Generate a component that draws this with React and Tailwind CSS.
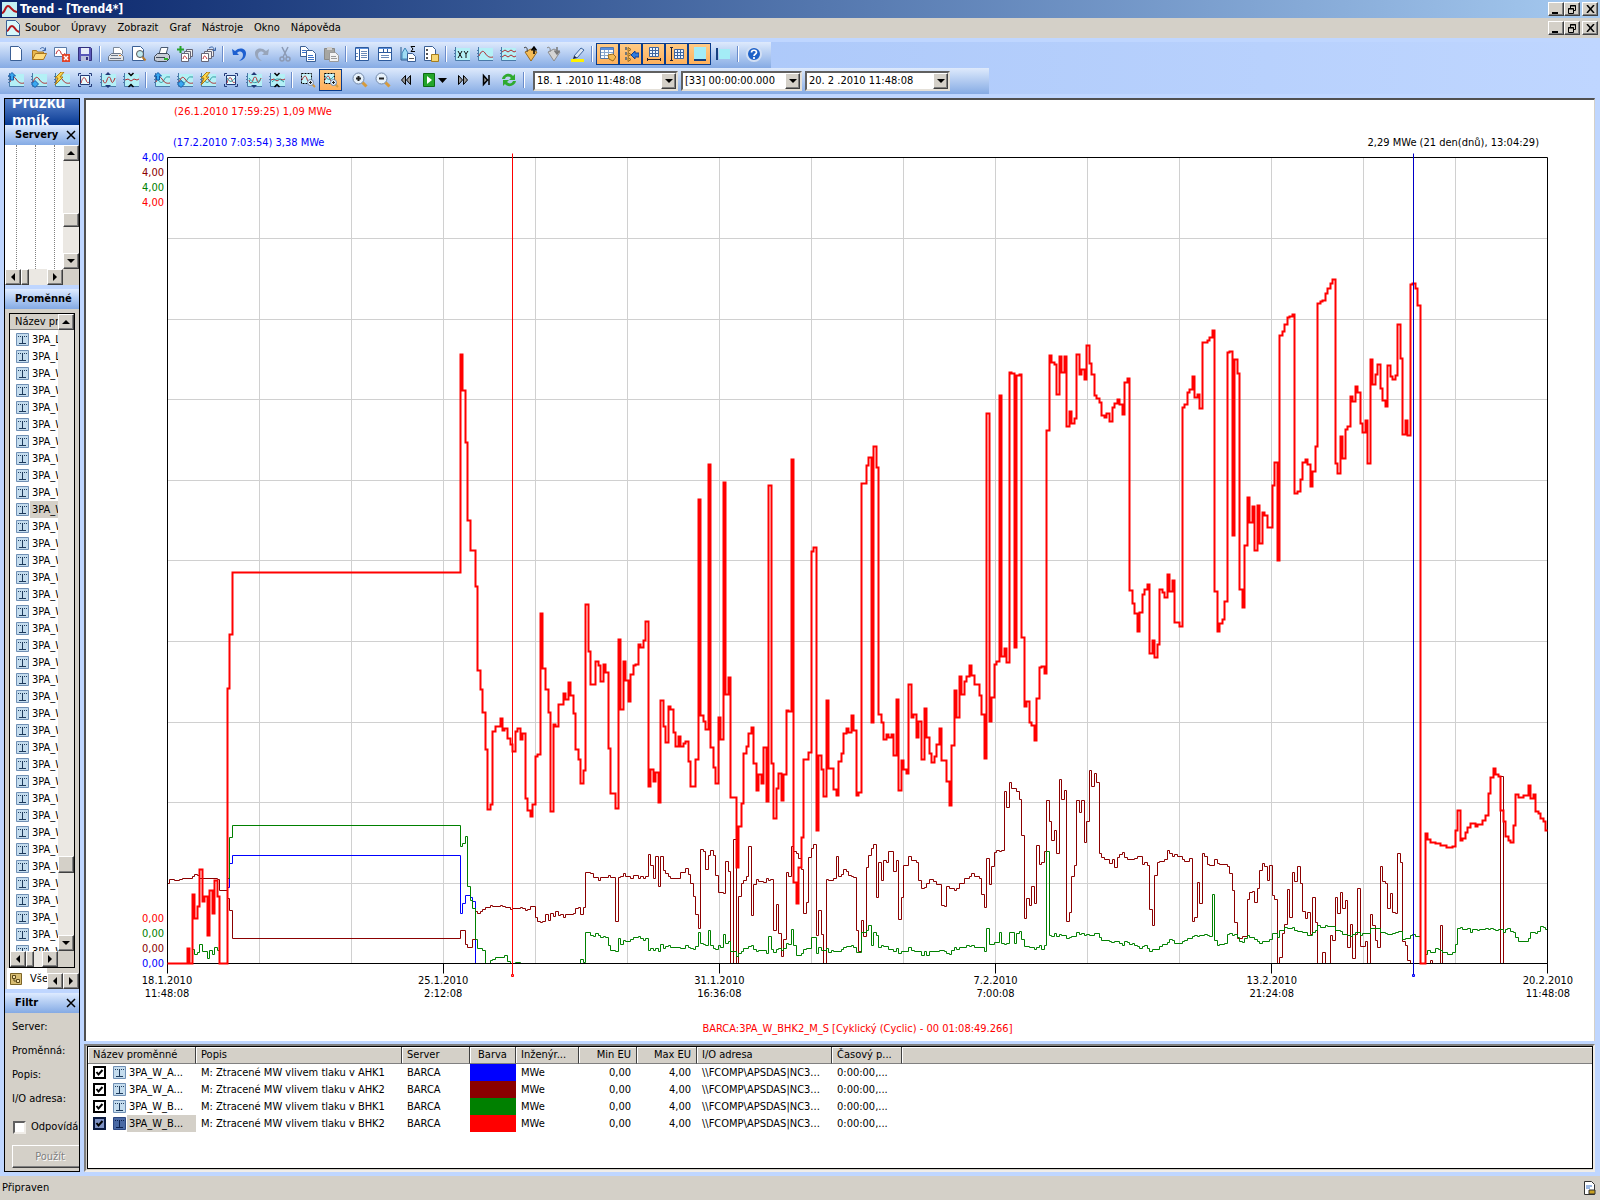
import React from "react";

// Step series, "x y" pairs in plot pixels: the value y holds from x to the next x
const RED =
  "167 963 187 948 189 963 192 894 194 918 197 906 199 869 202 901 204 896 207 935 209 890 212 913 214 880 217 896 219 963 227 688 229 634 232 572 460 354 462 390 465 442 467 520 470 550 475 586 477 670 480 689 482 712 485 749 487 809 490 804 492 731 495 726 500 718 502 730 504 728 507 738 510 744 512 751 515 731 517 728 520 739 522 733 525 798 527 810 530 816 532 804 535 756 537 754 540 613 542 668 545 689 548 712 550 811 553 724 555 726 558 704 563 693 565 699 568 682 570 695 573 713 575 749 578 759 580 783 583 770 585 604 588 651 590 684 595 661 598 665 600 681 603 664 605 672 608 748 610 793 615 808 618 639 620 709 623 661 625 680 628 701 630 674 633 665 635 664 638 644 640 647 643 640 645 621 648 786 650 769 653 781 655 772 658 802 660 700 663 726 665 742 668 706 670 709 673 732 675 746 678 736 680 746 683 743 685 741 688 761 690 786 695 759 698 499 700 715 703 721 705 729 708 464 710 747 713 767 715 783 718 717 720 739 723 482 725 694 728 677 730 797 736 867 738 826 741 803 743 753 746 746 748 733 751 727 753 763 756 790 758 774 761 783 763 747 766 801 768 485 771 763 773 818 776 788 778 773 781 800 783 774 786 710 788 711 791 459 793 882 796 903 798 867 801 837 803 759 808 752 811 551 813 547 816 830 818 755 821 769 823 796 826 700 828 768 833 789 836 795 838 761 841 753 843 733 846 728 848 732 851 715 853 730 856 795 858 792 861 483 866 465 868 457 871 722 873 446 876 467 878 714 881 722 883 739 886 734 888 737 891 734 893 755 896 699 898 790 901 760 903 769 906 773 908 684 911 717 913 714 916 737 918 721 921 759 924 708 926 737 929 753 931 762 934 756 936 744 939 728 941 760 946 781 949 805 951 745 954 690 956 717 959 676 961 694 964 681 966 676 969 665 971 675 974 684 979 695 981 714 984 758 986 413 989 721 991 697 994 664 996 661 999 395 1001 656 1004 648 1006 662 1009 372 1011 373 1014 647 1016 375 1019 374 1021 637 1024 706 1026 701 1029 722 1031 725 1034 740 1036 698 1039 667 1041 666 1044 673 1046 430 1049 355 1051 362 1054 364 1056 394 1059 356 1061 372 1064 356 1066 426 1069 411 1071 423 1074 418 1076 354 1079 374 1081 369 1084 379 1086 345 1089 363 1091 374 1094 395 1096 398 1099 402 1101 415 1104 417 1106 413 1109 421 1112 407 1114 403 1117 399 1119 404 1122 414 1124 382 1127 378 1129 590 1132 603 1134 613 1137 631 1139 612 1142 594 1144 589 1147 584 1149 653 1152 640 1154 657 1157 644 1159 589 1162 592 1164 597 1167 574 1169 591 1172 580 1174 622 1179 626 1182 407 1184 404 1187 392 1189 389 1192 376 1194 397 1197 394 1199 408 1202 342 1207 340 1209 337 1212 330 1214 591 1217 631 1219 623 1222 619 1224 601 1227 352 1229 351 1232 535 1234 359 1237 373 1239 589 1242 607 1244 545 1247 497 1249 522 1252 506 1254 550 1257 505 1259 543 1262 512 1264 515 1267 527 1272 485 1274 462 1277 560 1279 335 1282 331 1284 324 1287 317 1289 316 1292 314 1294 493 1297 491 1300 479 1302 462 1305 459 1307 464 1310 486 1312 471 1315 446 1317 303 1320 301 1322 300 1325 293 1327 288 1330 283 1332 279 1335 463 1337 473 1340 436 1342 458 1345 429 1347 426 1350 396 1352 401 1355 386 1357 392 1360 423 1362 432 1365 420 1367 463 1370 359 1372 384 1375 374 1377 364 1380 388 1382 400 1385 406 1387 365 1390 376 1392 379 1395 375 1397 324 1400 358 1402 434 1405 420 1407 435 1410 284 1412 283 1415 288 1417 305 1420 963 1425 833 1427 839 1430 842 1435 843 1440 845 1446 847 1452 846 1455 830 1457 810 1460 840 1462 838 1465 832 1467 827 1470 823 1475 826 1477 824 1482 820 1485 815 1488 793 1490 777 1493 768 1495 774 1498 776 1500 810 1503 821 1505 836 1508 840 1510 842 1513 825 1515 794 1518 797 1523 795 1528 785 1530 798 1533 794 1535 811 1538 813 1540 818 1543 821 1545 830";
const MAROON =
  "167 883 169 879 174 880 179 879 182 878 192 876 194 874 197 875 199 878 217 879 219 890 227 898 229 910 232 938 460 930 465 944 467 947 472 939 475 911 477 913 480 911 482 909 485 907 490 905 492 906 500 905 502 906 505 907 510 909 512 908 520 907 522 908 525 910 527 909 530 906 535 917 537 921 540 922 542 921 545 914 548 920 550 913 553 916 555 911 558 915 560 914 563 917 565 914 573 913 575 908 578 907 580 914 583 907 585 872 590 873 593 877 598 880 600 877 608 875 610 877 615 921 618 877 620 876 623 873 625 876 630 878 633 875 638 878 640 876 643 878 645 876 648 854 650 865 653 878 655 856 658 886 660 856 663 870 665 873 668 876 670 878 680 872 685 868 688 874 690 883 693 896 695 914 698 928 700 849 703 851 705 869 708 855 710 850 713 855 715 875 718 892 723 893 725 861 728 871 730 963 733 839 736 963 738 896 741 883 743 880 746 876 748 846 751 915 753 884 756 879 758 881 763 882 766 878 768 880 770 879 773 930 776 904 778 933 781 956 783 939 786 872 788 876 791 846 793 851 796 853 798 858 801 869 803 913 806 902 808 857 811 848 813 844 816 935 818 910 821 934 823 963 826 879 828 880 833 878 836 856 838 876 841 874 843 869 846 871 848 875 851 876 853 877 856 930 858 951 861 920 863 936 866 867 868 855 871 848 873 844 876 897 878 862 881 880 883 860 886 862 888 851 893 871 896 860 898 919 901 897 903 865 908 856 911 860 916 862 918 880 921 888 924 887 926 883 929 879 933 881 936 884 941 905 944 906 946 886 949 888 954 890 956 888 959 883 964 878 969 876 971 873 974 876 979 878 981 894 984 907 986 858 989 884 991 866 994 852 996 850 999 851 1001 850 1004 791 1006 807 1009 782 1011 788 1016 791 1019 799 1021 835 1024 918 1026 898 1029 905 1031 886 1034 903 1036 845 1039 864 1041 862 1044 851 1046 800 1049 821 1051 840 1054 830 1056 853 1059 779 1061 799 1064 790 1066 921 1069 912 1071 876 1074 865 1076 800 1079 812 1081 800 1084 842 1086 821 1089 770 1091 786 1094 773 1096 782 1099 853 1101 857 1104 859 1109 863 1112 859 1114 867 1117 857 1119 854 1122 852 1124 857 1127 859 1134 858 1137 856 1142 864 1144 862 1147 865 1149 909 1152 925 1154 875 1157 862 1159 861 1164 859 1167 850 1169 853 1172 856 1174 854 1177 856 1182 859 1184 861 1189 858 1192 921 1194 917 1197 882 1199 903 1202 853 1204 856 1207 864 1209 865 1214 859 1217 863 1219 864 1227 866 1229 873 1232 890 1234 922 1237 938 1242 936 1247 899 1249 892 1252 891 1254 902 1257 888 1259 870 1262 863 1264 866 1267 880 1269 865 1272 895 1274 899 1277 963 1279 957 1282 933 1284 924 1287 889 1289 917 1292 872 1294 881 1297 866 1300 883 1302 911 1305 918 1307 912 1310 934 1312 897 1315 922 1317 963 1322 952 1325 963 1330 935 1332 940 1335 897 1337 913 1340 892 1342 908 1345 900 1347 947 1350 924 1352 958 1355 934 1357 888 1360 946 1365 941 1367 963 1370 914 1372 925 1375 940 1377 947 1380 866 1382 881 1385 883 1387 908 1390 893 1392 912 1395 913 1397 853 1400 862 1402 941 1405 945 1407 960 1410 963 1430 960 1432 963 1440 925 1442 963 1500 776 1503 963";
const GREEN =
  "167 963 192 949 194 954 197 952 199 944 202 951 207 958 209 950 212 954 214 947 217 950 219 963 227 878 229 837 232 825 460 846 462 843 465 836 467 886 470 900 472 908 475 939 477 948 482 950 485 963 490 960 492 959 495 957 504 955 507 961 510 963 515 962 520 963 580 959 583 962 585 932 590 935 593 936 595 933 598 935 600 937 603 936 605 937 608 945 610 950 615 951 618 938 620 944 623 940 625 941 630 939 633 937 638 936 640 938 643 940 645 938 648 950 650 948 653 950 655 948 658 951 660 944 663 948 665 946 668 945 670 947 680 948 685 945 688 947 690 948 693 949 695 946 698 932 700 943 703 944 705 945 708 930 710 945 713 948 715 949 718 945 720 947 723 934 725 943 728 941 730 951 736 956 738 953 741 951 743 948 748 946 751 945 753 949 756 951 758 950 766 953 768 936 771 949 773 952 776 949 778 948 781 950 783 948 786 943 788 944 791 929 793 945 796 955 801 953 803 949 806 948 811 937 816 953 818 947 821 950 826 948 828 952 831 950 833 951 841 949 843 947 846 946 851 945 853 947 856 952 861 932 866 930 868 925 871 945 873 932 876 935 878 947 881 945 883 946 888 949 893 951 896 948 898 953 901 951 908 947 911 950 914 951 921 955 924 951 926 955 929 951 939 950 944 951 946 953 949 954 951 950 954 947 956 949 959 947 966 945 969 946 971 945 974 947 984 951 986 928 989 944 994 942 999 932 1001 943 1004 944 1006 943 1009 932 1014 943 1016 933 1019 931 1021 939 1024 946 1029 947 1034 949 1036 947 1039 945 1041 949 1044 945 1046 851 1049 935 1051 936 1054 933 1056 936 1059 934 1061 935 1066 938 1069 937 1071 936 1076 932 1079 934 1081 933 1084 935 1086 934 1089 935 1094 933 1099 937 1101 940 1109 941 1111 942 1114 941 1119 943 1122 945 1124 941 1127 942 1129 944 1132 943 1134 945 1137 946 1139 948 1142 946 1144 945 1147 948 1149 951 1152 949 1159 946 1162 944 1167 942 1169 939 1172 940 1174 943 1182 941 1184 940 1187 938 1192 936 1194 935 1197 936 1199 935 1204 934 1207 935 1209 936 1212 894 1214 940 1217 945 1219 944 1224 943 1227 934 1229 933 1232 935 1234 934 1237 937 1239 941 1242 942 1244 938 1247 935 1249 937 1254 939 1257 941 1259 943 1262 941 1269 939 1272 933 1277 937 1279 930 1284 927 1287 928 1292 927 1294 930 1297 931 1302 932 1307 935 1312 932 1315 930 1317 925 1320 927 1325 925 1327 926 1335 930 1340 931 1342 934 1347 935 1350 936 1352 934 1355 932 1360 935 1362 933 1370 928 1380 932 1385 933 1387 934 1392 933 1395 932 1398 931 1402 939 1405 938 1410 935 1412 934 1415 936 1420 963 1425 954 1427 950 1430 952 1435 948 1438 949 1440 950 1442 952 1447 954 1452 952 1455 944 1457 928 1460 927 1462 929 1467 928 1470 932 1472 929 1477 930 1479 929 1485 928 1488 929 1490 928 1493 929 1495 930 1498 929 1503 932 1505 929 1507 928 1510 931 1513 932 1515 937 1518 941 1528 938 1530 932 1535 933 1537 931 1540 926 1543 927 1545 929";
const BLUE =
  "167 963 227 887 229 863 232 855 460 913 462 903 465 895 470 897 472 901 475 963";

function stepPath(series) {
  const n = series.split(" ");
  let d = `M${n[0]} ${n[1]}`;
  for (let i = 2; i < n.length; i += 2) d += `H${n[i]}V${n[i + 1]}`;
  return d + "H1547";
}

const raised =
  "border border-t-white border-l-white border-r-[#404040] border-b-[#404040] bg-[#d4d0c8] shadow-[inset_-1px_-1px_0_#808080]";

/* ---------- icons ---------- */

const Icon = ({ children }) => (
  <svg width="16" height="16" viewBox="0 0 16 16" fill="none" aria-hidden="true">
    {children}
  </svg>
);

const Page = ({ x = 0, y = 0, w = 12, h = 15 }) => (
  <path
    d={`M${x + 0.5} ${y + 0.5}h${w - 4}l3 3v${h - 4}h${1 - w}z`}
    fill="#fff"
    stroke="#3a5f95"
  />
);

const Axes = () => (
  <>
    <path d="M2 2h14v12H2z" fill="#b4f0f6" />
    <path d="M1.500 1v13.500H16" stroke="#4a7aa8" />
    <path d="M0 4.500h1M0 7.500h1M0 10.500h1" stroke="#4a7aa8" />
  </>
);

const Lens = ({ sign = "plus" }) => (
  <>
    <path d="M10 10l4.500 4.500" stroke="#d69a3c" strokeWidth="3" />
    <circle cx="6.500" cy="6.500" r="5.500" fill="#e6f1fb" stroke="#7187a8" />
    <path d="M4 6.500h5" stroke="#222" strokeWidth="2" />
    {sign === "plus" && <path d="M6.500 4v5" stroke="#222" strokeWidth="2" />}
  </>
);

const DASH = { stroke: "#000", strokeDasharray: "2 1" };
const RED_WAVE = "M2 10C4 5 6 4 8 7s4 5 8 4";
const TEAL_WAVE = "M2 6c4 5 6 6 8 2s3-3 6-3";

const icons = {
  new: <Page x={2} />,
  open: (
    <>
      <path d="M1.500 13.500v-9h4l1 1.500h6v2" fill="#e9b94f" stroke="#a87520" />
      <path d="M1.500 13.500l3-6h11l-3 6z" fill="#ffdc7c" stroke="#a87520" />
      <path d="M9 3c2-2 4-2 5 1M14.500 1.500v3h-3" stroke="#3b66a8" />
    </>
  ),
  closeTrend: (
    <>
      <path d="M.5 1.500h12v9H.5z" fill="#fff" stroke="#5b7ba8" />
      <path d="M2 8c2-6 4-4 5-1s3 2 4 0" stroke="#c0282d" />
      <path d="M8 8h8v8H8z" fill="#e0452a" />
      <path d="M10 10l4 4M14 10l-4 4" stroke="#fff" strokeWidth="1.500" />
    </>
  ),
  save: (
    <>
      <path d="M1.500 1.500h12l1 1v12h-13z" fill="#5a57b8" stroke="#32307c" />
      <path d="M4 2h8v6H4z" fill="#e8ecf8" />
      <path d="M4 10h8v5H4z" fill="#b9c0dc" />
      <path d="M9 11h2v3H9z" fill="#32307c" />
    </>
  ),
  pageSetup: (
    <>
      <path d="M5.500 8V1.500h6l3 3V8" fill="#fff" stroke="#7b8898" />
      <path d="M.5 10.500l3-3h9l3 3v4H.5z" fill="#e3e6ea" stroke="#6b7789" />
      <path d="M3 9.500h7M2 12.500h11" stroke="#6b7789" />
      <path d="M11 9h2v1h-2z" fill="#f08a24" />
    </>
  ),
  preview: (
    <>
      <Page x={1} />
      <circle cx="9" cy="8" r="3.500" fill="#bfe9ef" stroke="#555" />
      <path d="M11.500 11l3 3.500" stroke="#b87a2a" strokeWidth="2" />
    </>
  ),
  print: (
    <>
      <path d="M5 8l2-6.500h7L12 8z" fill="#fff" stroke="#4a5a70" />
      <path d="M.5 10.500l3-3h10l2 2v3l-3 3h-9l-3-1z" fill="#c6ccd6" stroke="#3d4858" />
      <path d="M2 11.500h9" stroke="#3d4858" />
      <path d="M10 12h4v2h-4z" fill="#2fb52f" />
    </>
  ),
  addCharts: (
    <>
      <path d="M9.500 3.500h6v7h-6z" fill="#eee" stroke="#667" />
      <path d="M7.500 5.500h6v7h-6z" fill="#eee" stroke="#667" />
      <path d="M4.500 7.500h7v8h-7z" fill="#fff" stroke="#667" />
      <path d="M6 13c1-4 2-4 4 0" stroke="#c0282d" />
      <path d="M3.500 0v7M0 3.500h7" stroke="#27a22c" strokeWidth="2" />
    </>
  ),
  copyCharts: (
    <>
      <path d="M7.500 3.500h6v7h-6z" fill="#eee" stroke="#667" />
      <path d="M4.500 5.500h7v7h-7z" fill="#eee" stroke="#667" />
      <path d="M1.500 7.500h7v8h-7z" fill="#fff" stroke="#667" />
      <path d="M3 13c1-4 2-4 4 0" stroke="#c0282d" />
      <path d="M9 2c3-2 5-1 5 2M15.500 1.500v3h-3" stroke="#3b66a8" />
    </>
  ),
  undo: (
    <path d="M1 3l1 6h6L6 7c3-3 6-1 6 2s-2 4-4 6c5-1 7-4 7-8S9 0 4 5z" fill="#1d5fd0" />
  ),
  redo: (
    <path d="M15 3l-1 6H8l2-2C7 4 4 6 4 9s2 4 4 6c-5-1-7-4-7-8s6-7 11-2z" fill="#98a5ba" />
  ),
  cut: (
    <>
      <path d="M5 1l5 10M11 1L6 11" stroke="#8c9ab4" strokeWidth="1.500" />
      <circle cx="5" cy="13" r="2" stroke="#8c9ab4" strokeWidth="1.500" />
      <circle cx="11" cy="13" r="2" stroke="#8c9ab4" strokeWidth="1.500" />
    </>
  ),
  copy: (
    <>
      <Page w={9} h={11} />
      <Page x={6} y={4} w={10} h={12} />
      <path d="M2 4.500h4M2 6.500h4M8 9.500h5M8 11.500h6M8 13.500h6" stroke="#3b72c8" />
    </>
  ),
  paste: (
    <>
      <path d="M1.500 2.500h10v11h-10z" fill="#a6a6a2" stroke="#8a8a88" />
      <path d="M4 1h5v3H4z" fill="#d0d0d0" />
      <path d="M6.500 6.500h6l3 3v6h-9z" fill="#f2f2f2" stroke="#9a9a9a" />
      <path d="M8 10.500h5M8 12.500h6" stroke="#9a9a9a" />
    </>
  ),
  panelLeft: (
    <>
      <path d="M1.500 1.500h13v13h-13z" fill="#fff" stroke="#2d5a9c" />
      <path d="M2 2h12v1H2z" fill="#5b8fdc" />
      <path d="M5.500 3v11" stroke="#2d5a9c" />
      <path d="M7 5.500h6M7 7.500h6M7 9.500h6M7 11.500h6M2 7.500h2M2 10.500h2" stroke="#6a8ab8" />
    </>
  ),
  panelTop: (
    <>
      <path d="M1.500 1.500h13v13h-13z" fill="#fff" stroke="#2d5a9c" />
      <path d="M2 2h12v1H2z" fill="#5b8fdc" />
      <path d="M2 6.500h12M6.500 3v3M10.500 3v3" stroke="#2d5a9c" />
      <path d="M4 9.500h8M4 11.500h8" stroke="#6a8ab8" />
    </>
  ),
  stats: (
    <>
      <path d="M1 1v13h6" stroke="#2d5a8c" />
      <path d="M2 13V7l3-5 3 5v6z" fill="#9fdcf4" stroke="#3f86b8" />
      <path d="M15 .5h-4l2 2.500-2 2.500h4" stroke="#000" />
      <Page x={7} y={7} w={9} h={9} />
      <path d="M9 12.500h5" stroke="#555" />
    </>
  ),
  notes: (
    <>
      <Page x={1} />
      <path d="M3 3h2v2H3zM3 7h2v2H3zM3 11h2v2H3z" fill="#555" />
      <path d="M8.500 8.500h7v7h-7z" fill="#f7d774" stroke="#a57d20" />
    </>
  ),
  xy: (
    <>
      <Axes />
      <path d="M4 5l4 7M8 5l-4 7M10 5l2 3 2-3M12 8v4" stroke="#111" />
    </>
  ),
  wave: (
    <>
      <Axes />
      <path d={RED_WAVE} stroke="#b02a30" />
    </>
  ),
  waves: (
    <>
      <Axes />
      <path d="M2 6l3-2 3 2 3-2 3 2 2-1M2 11l3-2 3 2 3-2 3 2 2-1" stroke="#b02a30" />
    </>
  ),
  tagUp: (
    <>
      <path d="M2 6l6-3 6 3-6 9z" fill="#f4bb55" stroke="#9a6a1c" />
      <path d="M1 2c2-2 4 0 3 4" stroke="#444" />
      <path d="M11 8V2M8.500 4.500L11 1l2.500 3.500" stroke="#000" strokeWidth="1.500" />
    </>
  ),
  tagDown: (
    <>
      <path d="M2 6l6-3 6 3-6 9z" fill="#d4d4d4" stroke="#8c8c8c" />
      <path d="M1 2c2-2 4 0 3 4" stroke="#888" />
      <path d="M11 1v6M8.500 4.500L11 8l2.500-3.500" stroke="#777" strokeWidth="1.500" />
    </>
  ),
  marker: (
    <>
      <path d="M5 10l7-8 3 2-7 8z" fill="#dbe6f4" stroke="#3f66a0" />
      <path d="M5 10l3 2-4 1z" fill="#223" />
      <path d="M2 13h13v3H2z" fill="#fff200" />
    </>
  ),
  gridTag: (
    <>
      <path d="M.5 1.500h13v11H.5z" fill="#fff" stroke="#5577a8" />
      <path d="M1 2h12v2H1z" fill="#5b8fdc" />
      <path d="M4.500 4v8M8.500 4v8M1 6.500h12M1 9.500h12" stroke="#8aa8d0" />
      <path d="M8 9l5-1 3 3-3 4-4-2z" fill="#f4bb55" stroke="#9a6a1c" />
    </>
  ),
  tagsLeft: (
    <>
      <path d="M2 1h2v3H2zM2 6h2v3H2zM2 11h2v3H2z" fill="#777" />
      <path d="M5 1.500l3 2-3 2zM5 6.500l3 2-3 2zM5 11.500l3 2-3 2z" fill="#f4bb55" stroke="#9a6a1c" />
      <path d="M8 9l4-4v2h4v4h-4v2z" fill="#2f7be0" stroke="#123f94" />
    </>
  ),
  gridX: (
    <>
      <path d="M3.500 1.500h9v9h-9z" fill="#eef6ff" stroke="#3f66a0" />
      <path d="M6.500 1v9M9.500 1v9M3 4.500h9M3 7.500h9" stroke="#3f66a0" />
      <path d="M1 13.500h14M1.500 12v3M14.500 12v3" stroke="#223" />
    </>
  ),
  gridY: (
    <>
      <path d="M5.500 3.500h9v9h-9z" fill="#eef6ff" stroke="#3f66a0" />
      <path d="M8.500 3v9M11.500 3v9M5 6.500h9M5 9.500h9" stroke="#3f66a0" />
      <path d="M2.500 1v14M1 1.500h3M1 14.500h3" stroke="#223" />
    </>
  ),
  panelBottom: (
    <>
      <path d="M2 1h12v12H2z" fill="#a4ecf6" />
      <path d="M2 13h12v2H2z" fill="#153f80" />
    </>
  ),
  panelSide: (
    <>
      <path d="M4 3h11v10H4z" fill="#a4ecf6" />
      <path d="M1 2h2v12H1z" fill="#153f80" />
    </>
  ),
  help: (
    <>
      <circle cx="8" cy="8" r="7" fill="#1f62c8" stroke="#d3e0f4" strokeWidth="2" />
      <path d="M5.500 6.500c0-3 5-3 5 0 0 1.500-2.500 1.500-2.500 3.500M8 11v2" stroke="#fff" strokeWidth="1.700" />
    </>
  ),
  zoomIn: <Lens />,
  zoomOut: <Lens sign="minus" />,
  rewind: <path d="M7.500 3.500v9L3.500 8zM12.500 3.500v9L8.500 8z" fill="#999" stroke="#000" />,
  forward: <path d="M3.500 3.500v9l4-4.500zM8.500 3.500v9l4-4.500z" fill="#999" stroke="#000" />,
  end: <path d="M5.500 3.500v9l4-4.500zM11 3v10" fill="#999" stroke="#000" strokeWidth="1.500" />,
  play: (
    <>
      <path d="M2.500 1.500h11v13h-11z" fill="#23a52a" stroke="#0b6b12" />
      <path d="M6 4v8l5-4z" fill="#fff" />
    </>
  ),
  refresh: (
    <>
      <path d="M1 7c1-5 8-7 11-3l2-2v6H8l2-2C8 4 5 4 4 7z" fill="#2faa2f" />
      <path d="M15 9c-1 5-8 7-11 3l-2 2V8h6l-2 2c2 2 5 2 6-1z" fill="#2faa2f" />
    </>
  ),
};

// the curve tools come in two sets: one curve, all curves
function curveIcon(kind, all) {
  const curves = (
    <>
      {all && <path d={TEAL_WAVE} stroke="#2f9aa0" />}
      <path d={RED_WAVE} stroke="#b02a30" />
    </>
  );
  switch (kind) {
    case "up":
      return (
        <>
          <Axes />
          {curves}
          <path d="M4 .5l3.500 3.500H5.500v4h-3V4H.5z" fill="#39a9f0" stroke="#1559a8" />
        </>
      );
    case "down":
      return (
        <>
          <Axes />
          {curves}
          <path d="M4 15.500l3.500-3.500L4 8.500.5 12z" fill="#39a9f0" stroke="#1559a8" />
        </>
      );
    case "flash":
      return (
        <>
          <Axes />
          {curves}
          <path d="M7 0L1 6h3L1 13l8-8H6l4-5z" fill="#ffd84a" stroke="#a87a18" />
        </>
      );
    case "frame":
      return (
        <>
          <path d="M3.500 3.500h9v9h-9z" fill="#e8fbff" stroke="#223a78" />
          <path d="M1.500 4V1.500H4M12 1.500h2.500V4M14.500 12v2.500H12M4 14.500H1.500V12" stroke="#223a78" />
          <path d="M4 11c2-7 4-6 5-3s2 3 3 2" stroke="#b02a30" />
          {all && <path d="M4 6c3 5 5 4 8 0" stroke="#2f9aa0" />}
        </>
      );
    case "stretch":
      return (
        <>
          <Axes />
          <path d="M3 8c1 4 3 4 4 0s3-4 4 0 2 3 4-2" stroke="#b02a30" />
          {all && <path d="M3 6c4 6 7 6 12 1" stroke="#2f9aa0" />}
          <path d="M8 0l3 3H5zM8 16l3-3H5z" fill="#223a78" />
        </>
      );
    default:
      return (
        <>
          <Axes />
          <path d="M2 8l3-1 3 2 3-2 3 1 2-1" stroke="#b02a30" />
          {all && <path d="M3 10c4-4 7-4 12 0" stroke="#2f9aa0" />}
          <path d="M5.500 1L8 3.500 10.500 1M5.500 15L8 12.500l2.500 2.500" stroke="#000" strokeWidth="1.500" />
        </>
      );
  }
}

const selectIcon = (all) => (
  <>
    <path d="M1.500 1.500h10v10h-10z" fill="#c6f4fa" {...DASH} />
    <path d="M2 8c2-5 4-5 5-1s3 2 4 1" stroke="#b02a30" />
    {all && <path d="M2 4c3 5 6 4 9 0" stroke="#2f9aa0" />}
    <path d="M12 12l3 3" stroke="#d69a3c" strokeWidth="2" />
    <circle cx="10.500" cy="10.500" r="3" fill="#e6f1fb" stroke="#7187a8" />
    <path d="M9 10.500h3M10.500 9v3" stroke="#222" />
  </>
);

const TrendLogo = () => (
  <svg width="15" height="15" viewBox="0 0 15 15" aria-hidden="true">
    <path d="M0 0h15v15H0z" fill="#c4f1f4" />
    <path d="M0 11c3 0 3-7 6-7s3 5 9 6" fill="none" stroke="#b3161c" strokeWidth="2" />
  </svg>
);

const TrendDoc = () => (
  <svg width="14" height="16" viewBox="0 0 14 16" aria-hidden="true">
    <path d="M.5.5h9l4 4v11H.5z" fill="#d8f7fa" stroke="#3a5f95" />
    <path d="M1 11c2 0 2-5 5-5s2 4 7 6" fill="none" stroke="#b3161c" strokeWidth="2" />
  </svg>
);

const TagIcon = ({ selected }) => {
  const line = selected ? "#0b1f4c" : "#1d3a5c";
  return (
    <svg width="13" height="13" viewBox="0 0 13 13" className="shrink-0" aria-hidden="true">
      <path
        d="M.5.5h12v12H.5z"
        fill={selected ? "#4a69a4" : "#c4dcee"}
        stroke={selected ? "#2c4782" : "#6f8fb4"}
      />
      <path d="M2 3.500h9" stroke={line} strokeDasharray="1 1" />
      <path d="M6.500 3v7M3 10.500h7" stroke={line} />
    </svg>
  );
};

/* ---------- small controls ---------- */

const WindowButtons = () => (
  <div className="ml-auto flex pr-[2px]">
    <button aria-label="Minimalizovat" className={`flex h-[14px] w-[16px] items-center justify-center ${raised}`}>
      <svg width="10" height="9" viewBox="0 0 10 9"><path d="M1 7h6v2H1z" /></svg>
    </button>
    <button aria-label="Obnovit" className={`flex h-[14px] w-[16px] items-center justify-center ${raised}`}>
      <svg width="10" height="9" viewBox="0 0 10 9" fill="none" stroke="#000">
        <path d="M3.500 3V.5h5v5H7M3 1h6M1.500 3.500h5v5h-5zM1 4h6" />
      </svg>
    </button>
    <button aria-label="Zavřít" className={`ml-[2px] flex h-[14px] w-[16px] items-center justify-center ${raised}`}>
      <svg width="9" height="8" viewBox="0 0 9 8"><path d="M1 0l7 8M8 0L1 8" stroke="#000" strokeWidth="1.500" /></svg>
    </button>
  </div>
);

const ToolButton = ({ name, children, active }) => (
  <button
    aria-label={name}
    className={
      active
        ? "flex h-[22px] w-[23px] items-center justify-center border border-[#0a3c8c] bg-linear-to-b from-[#ffcb85] to-[#ffb05a]"
        : "flex h-[22px] w-[23px] items-center justify-center"
    }
  >
    <Icon>{children || icons[name]}</Icon>
  </button>
);

const Separator = () => (
  <span className="ml-[3px] mr-[3px] h-4 w-[2px] border-l border-r border-l-[#6a8ccb] border-r-white" />
);

const ARROWS = {
  up: "M4 2L8 6H0z",
  down: "M0 2h8L4 6z",
  left: "M2 4l4-4v8z",
  right: "M6 4L2 0v8z",
};

const ArrowButton = ({ dir, label }) => (
  <button aria-label={label} className={`flex h-4 w-4 shrink-0 items-center justify-center ${raised}`}>
    <svg width="8" height="8" viewBox="0 0 8 8"><path d={ARROWS[dir]} /></svg>
  </button>
);

const Combo = ({ label, value, wide }) => (
  <div
    className={`${wide ? "w-[145px]" : "w-[121px]"} mr-[3px] flex h-5 border-2 border-t-[#606060] border-l-[#606060] border-r-[#e4e0d8] border-b-[#e4e0d8] bg-white`}
  >
    <select aria-label={label} className="min-w-0 flex-1 appearance-none pl-[2px] text-[11px] leading-4 text-black">
      <option>{value}</option>
    </select>
    <span className={`flex w-[15px] items-center justify-center ${raised}`}>
      <svg width="8" height="8" viewBox="0 0 8 8"><path d={ARROWS.down} /></svg>
    </span>
  </div>
);

const PanelHeader = ({ title, closable }) => (
  <div className="flex h-5 shrink-0 items-center justify-between bg-linear-to-b from-[#deebff] to-[#84aae4] pr-[3px] pl-[10px] text-[11px] font-bold">
    {title}
    {closable && (
      <button aria-label="Zavřít panel">
        <svg width="10" height="10" viewBox="0 0 10 10"><path d="M1 1l8 8M9 1L1 9" stroke="#000" strokeWidth="1.500" /></svg>
      </button>
    )}
  </div>
);

/* ---------- top bars ---------- */

const MENU = ["Soubor", "Úpravy", "Zobrazit", "Graf", "Nástroje", "Okno", "Nápověda"];
const CURVE_TOOLS = ["up", "down", "flash", "frame", "stretch", "shrink"];

const TopBars = () => (
  <header>
    <div className="flex h-[18px] items-center bg-linear-to-r from-[#0a246a] to-[#a6caf0] pl-[2px]">
      <TrendLogo />
      <h1 className="pl-[3px] text-[12px] font-bold text-white">Trend - [Trend4*]</h1>
      <WindowButtons />
    </div>
    <nav className="flex h-5 items-center bg-[#d4d0c8] pl-[6px]">
      <TrendDoc />
      <ul className="flex gap-[11px] pl-[5px]">
        {MENU.map((item) => (
          <li key={item}>
            <a href="#">{item}</a>
          </li>
        ))}
      </ul>
      <WindowButtons />
    </nav>
    <div className="bg-linear-to-r from-[#9ebef5] to-[#bfd6ff] bg-clip-content py-1">
      <div className="flex h-[26px] w-[771px] items-start bg-linear-to-b from-[#deeafc] to-[#86abe4] pt-[1px] pl-1">
        {["new", "open", "closeTrend", "save"].map((n) => <ToolButton key={n} name={n} />)}
        <BarGap />
        {["pageSetup", "preview", "print", "addCharts", "copyCharts"].map((n) => <ToolButton key={n} name={n} />)}
        <BarGap />
        {["undo", "redo", "cut", "copy", "paste"].map((n) => <ToolButton key={n} name={n} />)}
        <BarGap />
        {["panelLeft", "panelTop", "stats", "notes"].map((n) => <ToolButton key={n} name={n} />)}
        <BarGap />
        {["xy", "wave", "waves", "tagUp", "tagDown", "marker"].map((n) => <ToolButton key={n} name={n} />)}
        <BarGap />
        {["gridTag", "tagsLeft", "gridX", "gridY", "panelBottom"].map((n) => <ToolButton key={n} name={n} active />)}
        <ToolButton name="panelSide" />
        <BarGap />
        <ToolButton name="help" />
      </div>
      <div className="flex h-[26px] w-[989px] items-start bg-linear-to-b from-[#deeafc] to-[#86abe4] pt-[1px] pl-1">
        {CURVE_TOOLS.map((k) => <ToolButton key={k} name={k}>{curveIcon(k, false)}</ToolButton>)}
        <BarGap />
        {CURVE_TOOLS.map((k) => <ToolButton key={k} name={`${k} all`}>{curveIcon(k, true)}</ToolButton>)}
        <BarGap />
        <ToolButton name="select">{selectIcon(false)}</ToolButton>
        <ToolButton name="select all" active>{selectIcon(true)}</ToolButton>
        <span className="w-[6px]" />
        {["zoomIn", "zoomOut", "rewind"].map((n) => <ToolButton key={n} name={n} />)}
        <div className="flex w-[34px] items-center">
          <ToolButton name="play" />
          <button aria-label="play options" className="-ml-[2px]">
            <svg width="9" height="5" viewBox="0 0 9 5"><path d="M0 0h9L4.500 5z" /></svg>
          </button>
        </div>
        {["forward", "end", "refresh"].map((n) => <ToolButton key={n} name={n} />)}
        <BarGap />
        <span className="w-[5px]" />
        <div className="flex pt-[2px]">
          <Combo wide label="Od" value="18. 1 .2010 11:48:08" />
          <Combo label="Rozsah" value="[33] 00:00:00.000" />
          <Combo wide label="Do" value="20. 2 .2010 11:48:08" />
        </div>
      </div>
    </div>
  </header>
);

// separator as tall as the buttons beside it
function BarGap() {
  return (
    <span className="flex h-[22px] items-center">
      <Separator />
    </span>
  );
}

/* ---------- left explorer ---------- */

const TAGS = Array.from({ length: 37 }, (_, i) => (i < 2 ? "3PA_L" : "3PA_W"));

const Sidebar = () => (
  <aside className="flex w-[76px] shrink-0 flex-col border border-black bg-[#bfd6ff]">
    <div className="flex h-[26px] shrink-0 items-center overflow-hidden bg-linear-to-b from-[#5a84cc] to-[#063a94] px-[7px]">
      <h2 className="font-['Liberation_Sans',sans-serif] text-[16px] leading-[18px] font-bold break-all text-white">
        Průzkumník
      </h2>
    </div>

    <PanelHeader title="Servery" closable />
    <div className="flex h-[124px] shrink-0 bg-white">
      <div className="flex flex-1 gap-[18px] pl-[11px]">
        <span className="border-l border-dotted border-[#808080]" />
        <span className="border-l border-dotted border-[#808080]" />
        <span className="border-l border-dotted border-[#808080]" />
      </div>
      <div className="flex flex-col bg-[#ebe8e3]">
        <ArrowButton dir="up" label="Nahoru" />
        <span className="flex-1" />
        <span className={`h-[14px] w-4 ${raised}`} />
        <span className="h-[26px]" />
        <ArrowButton dir="down" label="Dolů" />
      </div>
    </div>
    <div className="flex h-4 shrink-0 bg-[#ebe8e3]">
      <ArrowButton dir="left" label="Vlevo" />
      <span className={`w-2 ${raised}`} />
      <span className="flex-1" />
      <ArrowButton dir="right" label="Vpravo" />
      <span className="w-4 bg-[#d4d0c8]" />
    </div>

    <div className="h-1 shrink-0" />
    <PanelHeader title="Proměnné" />
    <div className="flex min-h-0 flex-1 flex-col bg-[#d4d0c8] px-1 pt-1">
      <div className="flex min-h-0 flex-1 flex-col border border-black bg-white">
        <div className="flex min-h-0 flex-1">
          <div className="flex min-w-0 flex-1 flex-col overflow-hidden">
            <div className="h-4 shrink-0 overflow-hidden border-b border-[#808080] bg-[#d4d0c8] pl-[5px] leading-4 whitespace-nowrap">
              Název proměnné
            </div>
            <ul className="min-h-0 flex-1 overflow-hidden pt-[1px]">
              {TAGS.map((tag, i) => (
                <li key={i} className="flex h-[17px] items-center overflow-hidden pl-[6px]">
                  <TagIcon />
                  <span className={i === 10 ? "ml-[1px] bg-[#d4d0c8] pl-[2px] leading-[17px]" : "ml-[1px] pl-[2px]"}>
                    {tag}
                  </span>
                </li>
              ))}
            </ul>
          </div>
          <div className="flex flex-col bg-[#ebe8e3]">
            <ArrowButton dir="up" label="Nahoru" />
            <span className="flex-1" />
            <span className={`h-[17px] w-4 ${raised}`} />
            <span className="h-[62px]" />
            <ArrowButton dir="down" label="Dolů" />
          </div>
        </div>
        <div className="flex h-4 shrink-0 bg-[#ebe8e3]">
          <ArrowButton dir="left" label="Vlevo" />
          <span className={`w-2 ${raised}`} />
          <span className="flex-1" />
          <ArrowButton dir="right" label="Vpravo" />
          <span className="w-4 bg-[#d4d0c8]" />
        </div>
      </div>
    </div>
    <div className="flex h-[21px] shrink-0 items-end overflow-hidden bg-[#d4d0c8] pl-[2px]">
      <div className="flex h-full flex-1 items-center overflow-hidden bg-white pl-[3px]">
        <svg width="12" height="12" viewBox="0 0 12 12" className="shrink-0" aria-hidden="true">
          <path d="M.5.5h11v11H.5z" fill="#d8bd72" stroke="#7c6426" />
          <path d="M2.500 2.500h3v3h-3zM6.500 6.500h3v3h-3zM4 6v2h2" fill="#f5e3ad" stroke="#5c4818" />
        </svg>
        <span className="pl-2">Vše</span>
      </div>
      <ArrowButton dir="left" label="Předchozí záložka" />
      <ArrowButton dir="right" label="Další záložka" />
    </div>

    <div className="h-1 shrink-0" />
    <PanelHeader title="Filtr" closable />
    <form className="h-[158px] shrink-0 overflow-hidden bg-[#d4d0c8] pl-[7px] whitespace-nowrap">
      <div className="pt-[2px] leading-6">
        <p>Server:</p>
        <p>Proměnná:</p>
        <p>Popis:</p>
        <p>I/O adresa:</p>
      </div>
      <label className="flex h-8 items-center gap-[5px] pl-[1px]">
        <input
          type="checkbox"
          className="h-[13px] w-[13px] shrink-0 appearance-none border-2 border-t-[#606060] border-l-[#606060] border-r-[#f0ede8] border-b-[#f0ede8] bg-white"
        />
        Odpovídá
      </label>
      <button
        type="button"
        disabled
        className={`mt-[2px] h-[23px] w-[76px] text-[#808080] [text-shadow:1px_1px_0_#fff] ${raised}`}
      >
        Použít
      </button>
    </form>
  </aside>
);

/* ---------- trend chart ---------- */

const TIMES = [
  ["18.1.2010", "11:48:08"],
  ["25.1.2010", "2:12:08"],
  ["31.1.2010", "16:36:08"],
  ["7.2.2010", "7:00:08"],
  ["13.2.2010", "21:24:08"],
  ["20.2.2010", "11:48:08"],
];

const Plot = () => (
  <svg viewBox="167 157 1381 807" preserveAspectRatio="none" className="h-full min-w-0 flex-1 overflow-visible">
    <g transform="translate(.5 .5)" fill="none">
      <g stroke="#d0d0d0">
        {Array.from({ length: 14 }, (_, i) => (
          <path key={i} d={`M${259 + 92 * i} 157V963`} />
        ))}
        {Array.from({ length: 9 }, (_, i) => (
          <path key={i} d={`M167 ${Math.round(157.4 + 80.6 * (i + 1))}H1547`} />
        ))}
      </g>
      <path d={stepPath(BLUE)} stroke="#0000ff" />
      <path d={stepPath(MAROON)} stroke="#8b0000" />
      <path d={stepPath(GREEN)} stroke="#008000" />
      <path d="M167 157H1547V963H167z" stroke="#000" />
      {TIMES.map((_, i) => (
        <path key={i} d={`M${167 + 276 * i} 963V973`} stroke="#000" />
      ))}
      <path d={stepPath(RED)} stroke="#ff0000" strokeWidth="2" />
      <path d="M512 153V975" stroke="#ff0000" />
      <path d="M511 974h2v2h-2z" stroke="#ff0000" />
      <path d="M1413 153V975" stroke="#0000c8" />
      <path d="M1412 974h2v2h-2z" stroke="#0000ff" />
    </g>
  </svg>
);

const Chart = () => (
  <section className="flex min-h-0 flex-1 flex-col border-t-2 border-r border-l-2 border-t-[#505050] border-r-[#d4d0c8] border-l-[#505050] bg-white pr-[46px] leading-[14px]">
    <p className="pt-[5px] pl-[88px] text-[#ff0000]">(26.1.2010 17:59:25) 1,09 MWe</p>
    <div className="flex justify-between pt-[17px] pr-[9px] pb-[7px] pl-[87px]">
      <p className="text-[#0000ff]">(17.2.2010 7:03:54) 3,38 MWe</p>
      <p>2,29 MWe (21 den(dnů), 13:04:29)</p>
    </div>
    <div className="flex min-h-0 flex-1">
      <div className="-my-[7px] flex w-[81px] shrink-0 flex-col justify-between pr-[3px] text-right leading-[15px]">
        <div>
          <p className="text-[#0000ff]">4,00</p>
          <p className="text-[#8b0000]">4,00</p>
          <p className="text-[#008000]">4,00</p>
          <p className="text-[#ff0000]">4,00</p>
        </div>
        <div>
          <p className="text-[#ff0000]">0,00</p>
          <p className="text-[#008000]">0,00</p>
          <p className="text-[#8b0000]">0,00</p>
          <p className="text-[#0000ff]">0,00</p>
        </div>
      </div>
      <Plot />
    </div>
    <div className="flex justify-between pt-[10px] pl-[81px] text-center leading-[13px] whitespace-nowrap">
      {TIMES.map(([date, time]) => (
        <div key={date} className="flex w-0 justify-center">
          <p>
            {date}
            <br />
            {time}
          </p>
        </div>
      ))}
    </div>
    <p className="pt-[22px] pb-[5px] pl-[81px] text-center text-[#ff0000]">
      BARCA:3PA_W_BHK2_M_S [Cyklický (Cyclic) - 00 01:08:49.266]
    </p>
  </section>
);

/* ---------- variable table ---------- */

const COLUMNS = [
  ["Název proměnné", "w-[108px]"],
  ["Popis", "w-[206px]"],
  ["Server", "w-[68px]"],
  ["Barva", "w-[46px] text-center"],
  ["Inženýr...", "w-[63px]"],
  ["Min EU", "w-[58px] text-right"],
  ["Max EU", "w-[60px] text-right"],
  ["I/O adresa", "w-[135px]"],
  ["Časový p...", "w-[70px]"],
];

const ROWS = [
  { name: "3PA_W_A...", desc: "M: Ztracené MW vlivem tlaku v AHK1", color: "bg-[#0000ff]" },
  { name: "3PA_W_A...", desc: "M: Ztracené MW vlivem tlaku v AHK2", color: "bg-[#8b0000]" },
  { name: "3PA_W_B...", desc: "M: Ztracené MW vlivem tlaku v BHK1", color: "bg-[#008000]" },
  { name: "3PA_W_B...", desc: "M: Ztracené MW vlivem tlaku v BHK2", color: "bg-[#ff0000]", selected: true },
];

const VariableTable = () => (
  <section className="mt-[3px] h-[128px] shrink-0 border-2 border-t-[#808080] border-r-[#f0ede8] border-b-[#f0ede8] border-l-[#808080] bg-[#d4d0c8] pb-[1px] pl-[1px]">
    <div className="h-full border border-black bg-white">
      <table className="w-full table-fixed border-separate border-spacing-0 whitespace-nowrap">
        <thead>
          <tr className="h-4 bg-[#d4d0c8] text-left">
            {COLUMNS.map(([title, cls]) => (
              <th
                key={title}
                className={`border-r border-b border-r-[#404040] border-b-[#808080] px-[5px] font-normal shadow-[inset_1px_1px_0_#fff] ${cls}`}
              >
                {title}
              </th>
            ))}
            <th className="border-b border-[#808080] shadow-[inset_1px_1px_0_#fff]" />
          </tr>
        </thead>
        <tbody>
          {ROWS.map((row) => (
            <tr key={row.desc} className="h-[17px]">
              <td>
                <div className="flex h-[17px] items-center pl-[5px]">
                  <span className="relative flex h-[13px] w-[13px]">
                    <input
                      type="checkbox"
                      defaultChecked
                      aria-label={row.desc}
                      className={
                        row.selected
                          ? "h-[13px] w-[13px] appearance-none border-2 border-[#0a1a40] bg-[#7e92c4]"
                          : "h-[13px] w-[13px] appearance-none border-2 border-black bg-white"
                      }
                    />
                    <svg width="13" height="13" viewBox="0 0 13 13" className="pointer-events-none absolute inset-0">
                      <path d="M3.500 6l2 2.500 4-4.500" fill="none" stroke="#000" strokeWidth="2" />
                    </svg>
                  </span>
                  <span className="ml-[7px] flex">
                    <TagIcon selected={row.selected} />
                  </span>
                  <span
                    className={
                      row.selected ? "ml-[1px] flex-1 bg-[#d4d0c8] pl-[2px] leading-[17px]" : "ml-[1px] pl-[2px]"
                    }
                  >
                    {row.name}
                  </span>
                </div>
              </td>
              <td className="px-[5px]">{row.desc}</td>
              <td className="px-[5px]">BARCA</td>
              <td className={row.color} />
              <td className="px-[5px]">MWe</td>
              <td className="px-[6px] text-right">0,00</td>
              <td className="px-[6px] text-right">4,00</td>
              <td className="px-[5px]">{"\\\\FCOMP\\APSDAS|NC3..."}</td>
              <td className="px-[5px]">0:00:00,...</td>
              <td />
            </tr>
          ))}
        </tbody>
      </table>
    </div>
  </section>
);

export default function App() {
  return (
    <div className="flex h-screen flex-col overflow-hidden bg-[#bfd6ff] font-['DejaVu_Sans_Condensed','Liberation_Sans',sans-serif] text-[11px] leading-4 text-black">
      <TopBars />
      <div className="flex min-h-0 flex-1 pr-[5px] pb-1 pl-1">
        <Sidebar />
        <main className="ml-[4px] flex min-w-0 flex-1 flex-col">
          <Chart />
          <VariableTable />
        </main>
      </div>
      <footer className="flex h-6 shrink-0 items-center justify-between bg-[#d4d0c8] pr-1 pl-[2px]">
        <span>Připraven</span>
        <svg width="12" height="14" viewBox="0 0 12 14" aria-hidden="true">
          <path d="M.5.5h7l3 3v10H.5z" fill="#fff" stroke="#333" />
          <path d="M2 5h6M2 7h4" stroke="#3b72c8" />
          <path d="M5 9h6v4H5z" fill="#c8a020" stroke="#333" />
        </svg>
      </footer>
    </div>
  );
}
